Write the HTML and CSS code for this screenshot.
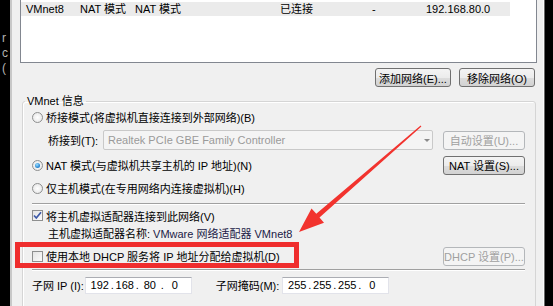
FILE: index.html
```html
<!DOCTYPE html>
<html lang="zh-CN">

<head>
    <meta charset="UTF-8">
    <title>虚拟网络编辑器</title>
    <link rel="stylesheet" href="styles.css">
</head>

<body>
    <div class="screen">
        <div class="edge-left">
            <span>r</span>
            <span>c</span>
            <span>(</span>
        </div>

        <div class="dialog">
            <div class="net-list">
                <div class="net-row">
                    <span>VMnet8</span>
                    <span>NAT 模式</span>
                    <span>NAT 模式</span>
                    <span>已连接</span>
                    <span>-</span>
                    <span>192.168.80.0</span>
                </div>
            </div>

            <div class="list-actions">
                <button class="btn">添加网络(E)...</button>
                <button class="btn">移除网络(O)</button>
            </div>

            <fieldset class="group">
                <legend>VMnet 信息</legend>

                <div class="row row-mode1">
                    <span class="radio"></span>桥接模式(将虚拟机直接连接到外部网络)(B)
                </div>
                <div class="row row-bridge">
                    <span class="bridge-label">桥接到(T):</span>
                    <div class="select">
                        <span>Realtek PCIe GBE Family Controller</span>
                        <i class="caret"></i>
                    </div>
                    <button class="btn btn-side" disabled>自动设置(U)...</button>
                </div>
                <div class="row row-mode2">
                    <span class="radio checked"></span>NAT 模式(与虚拟机共享主机的 IP 地址)(N)
                    <button class="btn btn-side">NAT 设置(S)...</button>
                </div>
                <div class="row row-mode3">
                    <span class="radio"></span>仅主机模式(在专用网络内连接虚拟机)(H)
                </div>

                <div class="sep"></div>

                <div class="row row-connect">
                    <span class="check">
                        <svg width="9" height="9" viewBox="0 0 9 9"><path d="M1 4.5 L3.3 7 L8 1.2" fill="none" stroke="#3d59a8" stroke-width="1.7"/></svg>
                    </span>将主机虚拟适配器连接到此网络(V)
                </div>
                <div class="row row-adapter">
                    主机虚拟适配器名称: <span class="adapter-name">VMware 网络适配器 VMnet8</span>
                </div>
                <div class="row row-dhcp">
                    <span class="check"></span>使用本地 DHCP 服务将 IP 地址分配给虚拟机(D)
                    <button class="btn btn-side" disabled>DHCP 设置(P)...</button>
                </div>

                <div class="sep sep-low"></div>

                <div class="row row-subnet">
                    <span>子网 IP (I):</span>
                    <div class="ip-box ip-first">
                        <span class="seg">192</span><span class="dot">.</span>
                        <span class="seg">168</span><span class="dot">.</span>
                        <span class="seg">80</span><span class="dot">.</span>
                        <span class="seg">0</span>
                    </div>
                    <span class="mask-label">子网掩码(M):</span>
                    <div class="ip-box">
                        <span class="seg">255</span><span class="dot">.</span>
                        <span class="seg">255</span><span class="dot">.</span>
                        <span class="seg">255</span><span class="dot">.</span>
                        <span class="seg">0</span>
                    </div>
                </div>
            </fieldset>
        </div>

        <div class="edge-right"></div>

        <!-- 标注 -->
        <div class="mark-box"></div>
        <svg class="mark-arrow" width="553" height="306" viewBox="0 0 553 306">
            <polygon fill="#f2332e" points="299,232 311.5,208.5 316.3,213.7 420.6,125.4 421.4,126.6 319.5,217.5 324,222.8"/>
        </svg>
    </div>
</body>

</html>
```

FILE: styles.css
```css
body,
html {
    margin: 0;
    padding: 0;
}

* {
    box-sizing: border-box;
}

body {
    background: #000;
    font-family: "Liberation Sans", "Noto Sans CJK SC", sans-serif;
    font-size: 11px;
    color: #000;
}

.screen {
    position: relative;
    width: 553px;
    height: 306px;
    overflow: hidden;
    display: flex;
}

.edge-left {
    width: 12px;
    background: #000;
    border-right: 2px solid #c8c8c8;
    color: #b4b4b4;
    padding-top: 31px;
    padding-left: 2px;
    display: flex;
    flex-direction: column;
    line-height: 15px;
    font-size: 12px;
}

.edge-right {
    width: 10px;
    background: #000;
    border-left: 1px solid #fcfcfc;
    box-shadow: inset 1px 0 0 #6a6a6a;
}

.dialog {
    flex: 1;
    background: #f0f0f0;
    padding: 0 6px 0 8px;
}

/* 网络列表 */
.net-list {
    margin-top: -3px;
    height: 66px;
    background: #fff;
    border: 1px solid #828790;
    padding-top: 4px;
}

.net-row {
    display: grid;
    grid-template-columns: 54px 55px 145px 92px 54px 1fr;
    height: 14px;
    line-height: 14px;
    margin-right: 26px;
    padding-left: 5px;
    background: #ebebeb;
    white-space: nowrap;
}

.list-actions {
    display: flex;
    justify-content: flex-end;
    gap: 8px;
    margin-top: 5px;
    padding-right: 2px;
}

.btn {
    font: inherit;
    color: #000;
    height: 19px;
    width: 76px;
    padding: 0;
    border: 1px solid #707070;
    border-radius: 3px;
    background: linear-gradient(#f4f4f4 0%, #ececec 50%, #dddddd 51%, #d2d2d2 100%);
    white-space: nowrap;
}

.btn:disabled {
    color: #a0a0a0;
    border-color: #b4b7ba;
    background: #f4f4f4;
}

/* VMnet 信息 */
.group {
    margin: 7px 1px 0 2px;
    padding: 0 10px 0 9px;
    border: 1px solid #d5d5d5;
    border-radius: 3px;
    box-shadow: inset 1px 1px 0 #fff;
    height: 230px;
}

.group legend {
    padding: 0 2px;
    margin-left: -7px;
    line-height: 14px;
}

.row {
    display: flex;
    align-items: center;
    white-space: nowrap;
}

.row-mode1 {
    height: 18px;
}

.row-bridge {
    height: 28px;
    padding-left: 16px;
}

.row-mode2 {
    height: 22px;
}

.row-mode3 {
    height: 24px;
}

.row-connect {
    height: 21px;
}

.row-adapter {
    height: 14px;
    padding-left: 16px;
}

.row-dhcp {
    height: 24px;
    margin-top: 4px;
}

.row-subnet {
    height: 28px;
}

.btn-side {
    width: 82px;
    margin-left: auto;
}

.bridge-label {
    width: 55px;
}

.select {
    flex: 1;
    height: 20px;
    margin-right: 10px;
    border: 1px solid #c9c9c9;
    border-radius: 2px;
    background: #f4f4f4;
    color: #9a9a9a;
    display: flex;
    align-items: center;
    padding-left: 4px;
}

.select span {
    flex: 1;
}

.caret {
    width: 0;
    height: 0;
    border-left: 3px solid transparent;
    border-right: 3px solid transparent;
    border-top: 3px solid #8a8a8a;
    margin-right: 2px;
}

.radio {
    width: 11px;
    height: 11px;
    border-radius: 50%;
    border: 1px solid #8e8f8f;
    background: radial-gradient(circle at 50% 50%, #fff 0%, #e2e2e2 100%);
    margin-right: 3px;
    flex: none;
    display: flex;
    align-items: center;
    justify-content: center;
}

.radio.checked::after {
    content: '';
    width: 5px;
    height: 5px;
    border-radius: 50%;
    background: radial-gradient(circle at 40% 35%, #9fe0ff 0%, #2c8ad4 60%, #1a5fa8 100%);
}

.check {
    width: 11px;
    height: 11px;
    border: 1px solid #8e8f8f;
    background: linear-gradient(135deg, #e4e4e4, #fbfbfb);
    margin-right: 3px;
    flex: none;
    display: flex;
    align-items: center;
    justify-content: center;
}

.adapter-name {
    margin-left: 3px;
    color: #202046;
}

.sep {
    margin-top: 3px;
    border-top: 1px solid #a0a0a0;
    border-bottom: 1px solid #fff;
}

.sep-low {
    margin-top: 1px;
}

.ip-box {
    width: 107px;
    height: 17px;
    background: #fff;
    border: 1px solid #e2e3ea;
    border-top-color: #abadb3;
    display: flex;
    align-items: center;
    padding-left: 4px;
}

.ip-first {
    margin-left: 1px;
}

.seg {
    width: 20px;
    text-align: center;
}

.dot {
    width: 5px;
    text-align: center;
}

.mask-label {
    margin-left: 24px;
    margin-right: 3px;
}

/* 标注 */
.mark-box {
    position: absolute;
    left: 15px;
    top: 242px;
    width: 284px;
    height: 26px;
    border: 5px solid #ef2d2d;
}

.mark-arrow {
    position: absolute;
    left: 0;
    top: 0;
    pointer-events: none;
}
```
